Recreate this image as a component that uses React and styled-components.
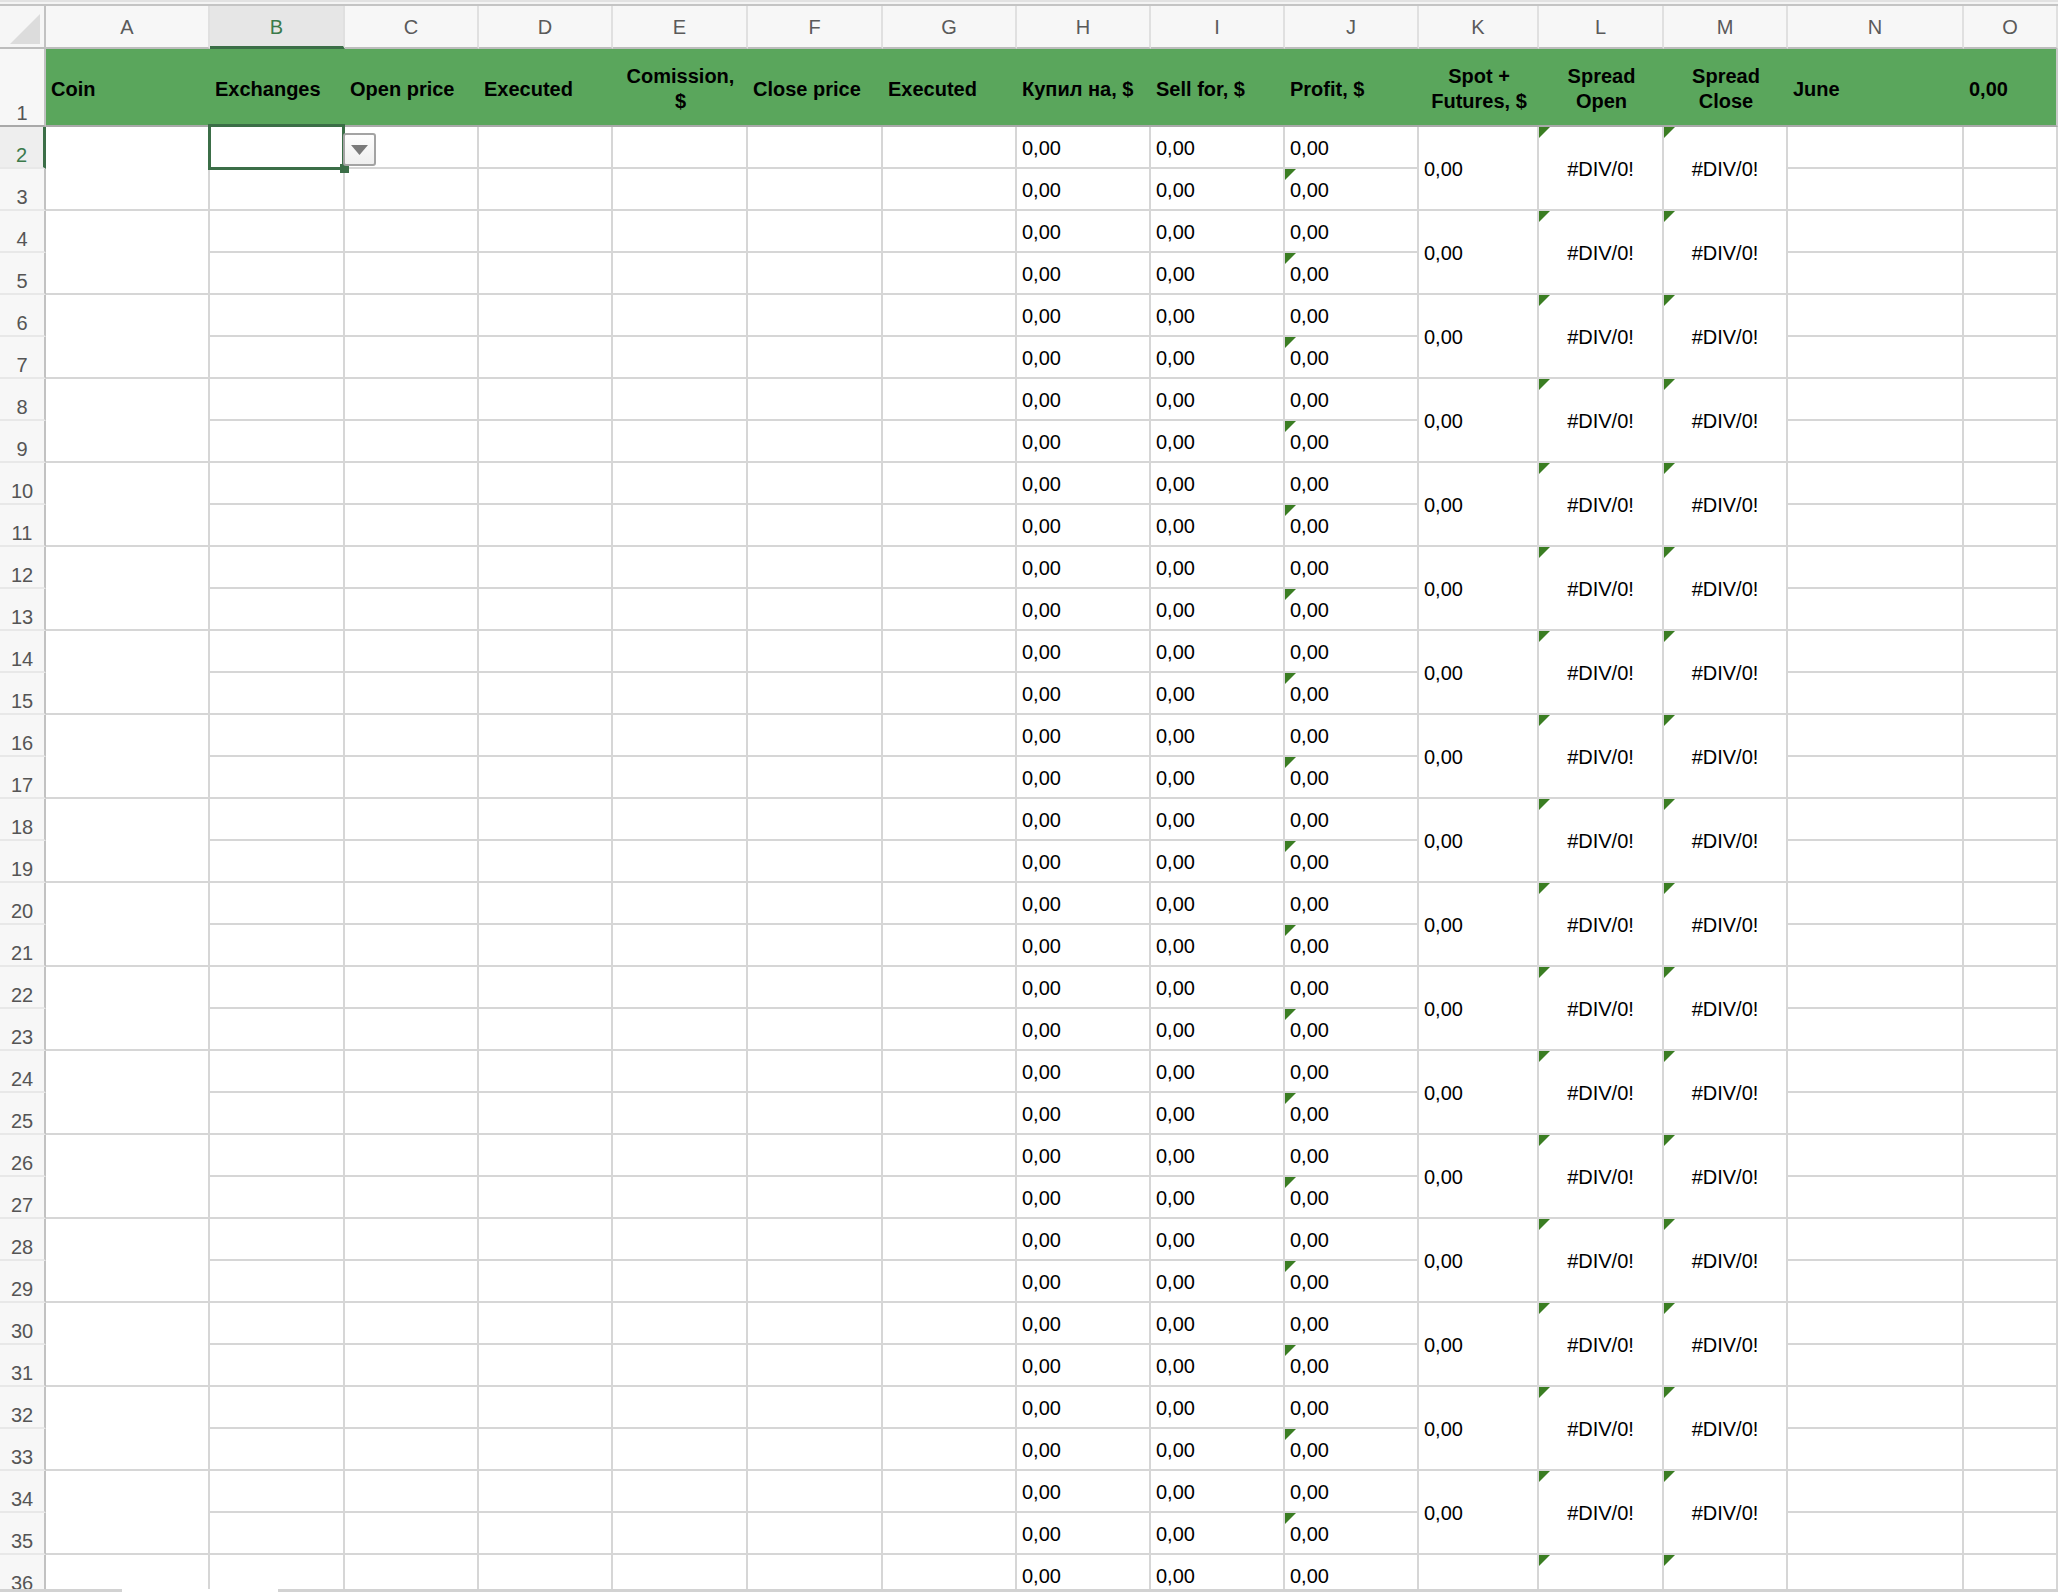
import React from 'react';
import styled, { createGlobalStyle, css } from 'styled-components';

const GREEN = '#3b6e47';
const GRID = '#d6d6d6';

const GlobalStyle = createGlobalStyle`
  html, body {
    margin: 0;
    padding: 0;
    background: #fff;
  }
  body {
    font-family: "Liberation Sans", Arial, Helvetica, sans-serif;
    overflow: hidden;
  }
`;

const COLUMNS = [
  { key: 'A', width: 164 },
  { key: 'B', width: 135 },
  { key: 'C', width: 134 },
  { key: 'D', width: 134 },
  { key: 'E', width: 135 },
  { key: 'F', width: 135 },
  { key: 'G', width: 134 },
  { key: 'H', width: 134 },
  { key: 'I', width: 134 },
  { key: 'J', width: 134 },
  { key: 'K', width: 120 },
  { key: 'L', width: 125 },
  { key: 'M', width: 124 },
  { key: 'N', width: 176 },
  { key: 'O', width: 94 },
];

const HEADERS = [
  { col: 'A', text: 'Coin' },
  { col: 'B', text: 'Exchanges' },
  { col: 'C', text: 'Open price' },
  { col: 'D', text: 'Executed' },
  { col: 'E', text: 'Comission,\n$', center: true },
  { col: 'F', text: 'Close price' },
  { col: 'G', text: 'Executed' },
  { col: 'H', text: 'Купил на, $' },
  { col: 'I', text: 'Sell for, $' },
  { col: 'J', text: 'Profit, $' },
  { col: 'K', text: 'Spot +\nFutures, $', center: true },
  { col: 'L', text: 'Spread\nOpen', center: true },
  { col: 'M', text: 'Spread\nClose', center: true },
  { col: 'N', text: 'June' },
  { col: 'O', text: '0,00' },
];

// every trade takes two sheet rows, starting at row 2
const PAIRS = Array.from({ length: 18 }, (_, i) => 2 + i * 2);

const Page = styled.div`
  width: 2058px;
  height: 100vh;
  display: flex;
  flex-direction: column;
  overflow: hidden;
`;

const TopStrip = styled.div`
  flex: 0 0 6px;
  box-sizing: border-box;
  background: #f4f4f4;
  border-top: 2px solid #e2e2e2;
  border-bottom: 2px solid #c4c4c4;
`;

const Viewport = styled.div`
  flex: 1;
  overflow: hidden;
`;

const BottomBar = styled.div`
  flex: 0 0 3px;
  display: grid;
  grid-template-columns: 122px 156px 1fr;
`;

const BarPiece = styled.div`
  background: ${p => (p.$gap ? '#fff' : '#d2d2d2')};
`;

const Sheet = styled.div`
  display: grid;
  grid-template-columns: 46px ${COLUMNS.map(c => `${c.width}px`).join(' ')};
  grid-template-rows: 43px 78px;
  grid-auto-rows: 42px;
  font-size: 20px;
  color: #000;
`;

const Corner = styled.div`
  position: relative;
  box-sizing: border-box;
  background: #f6f6f6;
  border-right: 2px solid #c2c2c2;
  border-bottom: 2px solid #bdbdbd;

  &::after {
    content: '';
    position: absolute;
    right: 4px;
    bottom: 3px;
    width: 30px;
    height: 30px;
    background: #dcdcdc;
    clip-path: polygon(100% 0, 100% 100%, 0 100%);
  }
`;

const ColHead = styled.div`
  box-sizing: border-box;
  display: flex;
  align-items: center;
  justify-content: center;
  padding-top: 2px;
  background: ${p => (p.$selected ? '#e6e6e6' : '#f7f7f7')};
  border-right: 2px solid #e0e0e0;
  border-bottom: ${p => (p.$selected ? `3px solid ${GREEN}` : '2px solid #bdbdbd')};
  color: ${p => (p.$selected ? '#3b7a4b' : '#5a5a5a')};
  font-size: 20px;
`;

const RowHead = styled.div`
  box-sizing: border-box;
  display: flex;
  align-items: flex-end;
  justify-content: center;
  padding-bottom: 1px;
  line-height: 22px;
  background: ${p => (p.$selected ? '#eeeeee' : '#f7f7f7')};
  border-right: ${p => (p.$selected ? `3px solid ${GREEN}` : '2px solid #c2c2c2')};
  border-bottom: 2px solid ${p => (p.$title ? '#a9a9a9' : '#e8e8e8')};
  color: ${p => (p.$selected ? '#3b7a4b' : '#555')};
  font-size: 20px;
`;

const HeadCell = styled.div`
  box-sizing: border-box;
  display: flex;
  align-items: center;
  padding: 4px 5px 0;
  background: #5aa65c;
  border-bottom: 2px solid #a9a9a9;
  font-weight: bold;
  line-height: 25px;
  white-space: pre-line;
  ${p => p.$center && css`
    justify-content: center;
    text-align: center;
  `}
  ${p => p.$last && css`
    border-right: 2px solid #c8c8c8;
  `}
`;

const Cell = styled.div`
  position: relative;
  box-sizing: border-box;
  display: flex;
  align-items: center;
  padding: 3px 5px 0;
  border-right: 2px solid ${GRID};
  border-bottom: 2px solid ${GRID};
  white-space: nowrap;
  ${p => p.$span && css`
    grid-row: span ${p.$span};
  `}
  ${p => p.$center && css`
    justify-content: center;
  `}
  ${p => p.$active && css`
    z-index: 2;
  `}
`;

const Flag = styled.span`
  position: absolute;
  top: 0;
  left: 0;
  width: 11px;
  height: 11px;
  background: #3a7d22;
  clip-path: polygon(0 0, 100% 0, 0 100%);
`;

const Selection = styled.div`
  position: absolute;
  top: -3px;
  left: -2px;
  right: -2px;
  bottom: -3px;
  border: 3px solid ${GREEN};
  pointer-events: none;
`;

const Handle = styled.div`
  position: absolute;
  right: -6px;
  bottom: -6px;
  width: 9px;
  height: 9px;
  background: ${GREEN};
`;

const DropButton = styled.div`
  position: absolute;
  top: 6px;
  left: 100%;
  width: 33px;
  height: 33px;
  box-sizing: border-box;
  display: flex;
  align-items: center;
  justify-content: center;
  background: linear-gradient(#fdfdfd, #efefef);
  border: 2px solid #a3a3a3;
  border-radius: 3px;
`;

function Arrow() {
  return (
    <svg width="17" height="10" viewBox="0 0 17 10">
      <polygon points="0,0 17,0 8.5,10" fill="#7a7a7a" />
    </svg>
  );
}

function Value({ children = '0,00', flag, ...rest }) {
  return (
    <Cell {...rest}>
      {flag && <Flag />}
      {children}
    </Cell>
  );
}

function TradeRows({ row }) {
  const next = row + 1;
  const isFirst = row === 2;
  return (
    <>
      <RowHead $selected={isFirst}>{row}</RowHead>
      <Cell $span={2} />
      {isFirst ? (
        <Cell $active>
          <Selection />
          <Handle />
          <DropButton>
            <Arrow />
          </DropButton>
        </Cell>
      ) : (
        <Cell />
      )}
      <Cell />
      <Cell />
      <Cell />
      <Cell />
      <Cell />
      <Value />
      <Value />
      <Value />
      <Value $span={2} />
      <Value $span={2} $center flag>#DIV/0!</Value>
      <Value $span={2} $center flag>#DIV/0!</Value>
      <Cell />
      <Cell />

      <RowHead>{next}</RowHead>
      <Cell />
      <Cell />
      <Cell />
      <Cell />
      <Cell />
      <Cell />
      <Value />
      <Value />
      <Value flag />
      <Cell />
      <Cell />
    </>
  );
}

export default function App() {
  return (
    <Page>
      <GlobalStyle />
      <TopStrip />
      <Viewport>
        <Sheet>
          <Corner />
          {COLUMNS.map(c => (
            <ColHead key={c.key} $selected={c.key === 'B'}>{c.key}</ColHead>
          ))}

          <RowHead $title>1</RowHead>
          {HEADERS.map((h, i) => (
            <HeadCell key={h.col} $center={h.center} $last={i === HEADERS.length - 1}>
              {h.text}
            </HeadCell>
          ))}

          {PAIRS.map(r => (
            <TradeRows key={r} row={r} />
          ))}
        </Sheet>
      </Viewport>
      <BottomBar>
        <BarPiece />
        <BarPiece $gap />
        <BarPiece />
      </BottomBar>
    </Page>
  );
}
